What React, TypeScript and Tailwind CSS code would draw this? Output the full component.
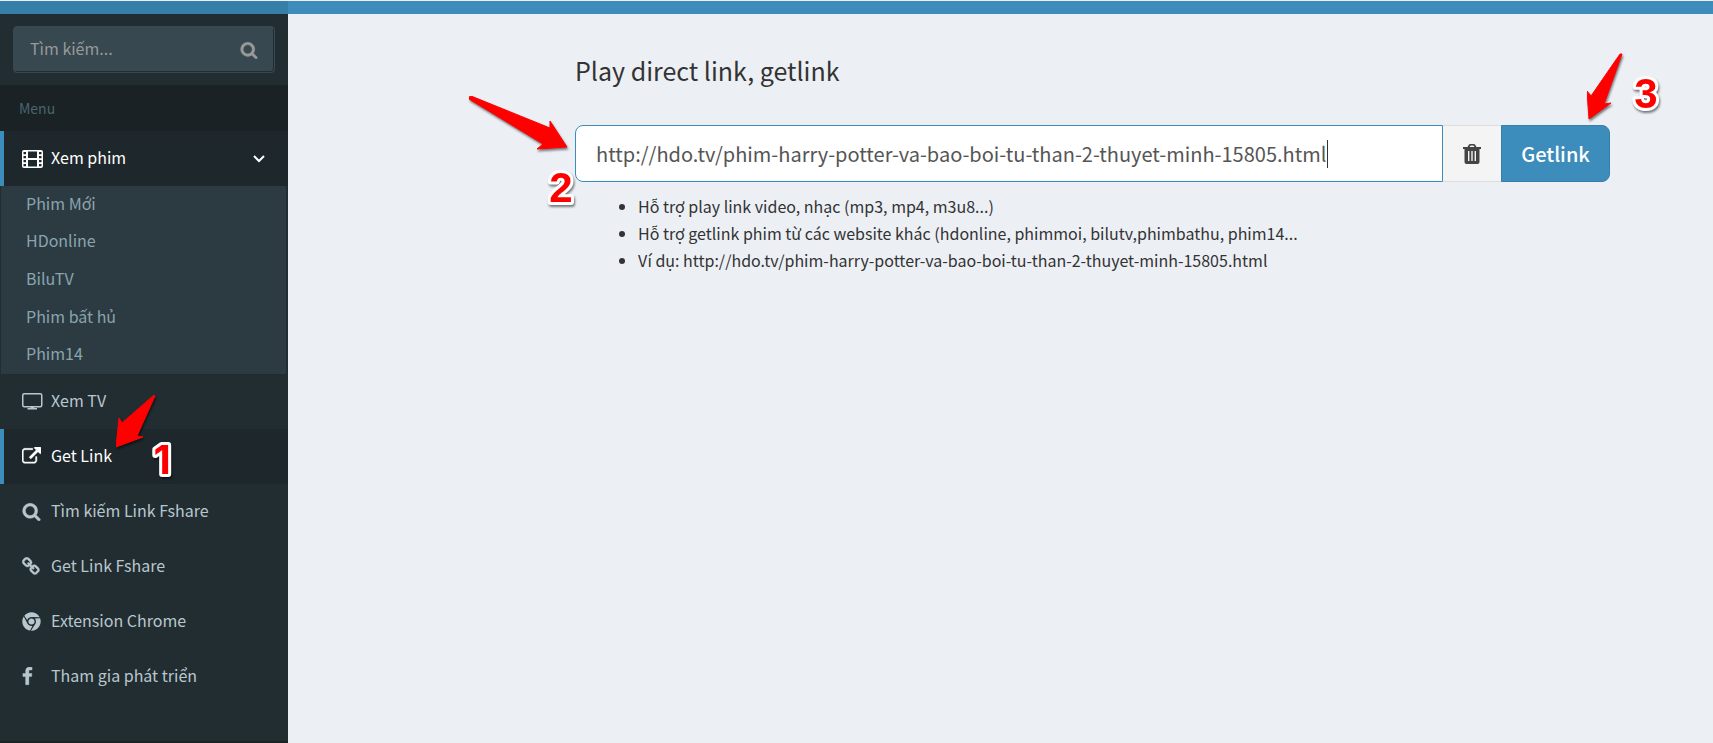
import { useState } from "react";
import type { ReactNode } from "react";
import { FaChrome } from "react-icons/fa";

const LINK = "http://hdo.tv/phim-harry-potter-va-bao-boi-tu-than-2-thuyet-minh-15805.html";

function Glyph({ d, className, box = "0 0 1792 1792" }: { d: string; className: string; box?: string }) {
  return (
    <svg viewBox={box} fill="currentColor" stroke="currentColor" strokeWidth="40" className={className} aria-hidden="true">
      <path d={d} />
    </svg>
  );
}

const SEARCH =
  "M1216 832q0-185-131.5-316.5t-316.5-131.5-316.5 131.5-131.5 316.5 131.5 316.5 316.5 131.5 316.5-131.5 131.5-316.5zm512 832q0 52-38 90t-90 38q-54 0-90-38l-343-342q-179 124-399 124-143 0-273.5-55.5t-225-150-150-225-55.5-273.5 55.5-273.5 150-225 225-150 273.5-55.5 273.5 55.5 225 150 150 225 55.5 273.5q0 220-124 399l343 343q37 37 37 90z";
const FACEBOOK =
  "M1343 12v264h-157q-86 0-116 36t-30 108v189h293l-39 296h-254v759h-306v-759h-255v-296h255v-218q0-186 104-288.5t277-102.5q147 0 228 12z";
const EXTERNAL =
  "M1408 928v320q0 119-84.5 203.5t-203.5 84.5h-832q-119 0-203.5-84.5t-84.5-203.5v-832q0-119 84.5-203.5t203.5-84.5h704q14 0 23 9t9 23v64q0 14-9 23t-23 9h-704q-66 0-113 47t-47 113v832q0 66 47 113t113 47h832q66 0 113-47t47-113v-320q0-14 9-23t23-9h64q14 0 23 9t9 23zm384-864v512q0 26-19 45t-45 19-45-19l-176-176-652 652q-10 10-23 10t-23-10l-114-114q-10-10-10-23t10-23l652-652-176-176q-19-19-19-45t19-45 45-19h512q26 0 45 19t19 45z";
const CHAIN =
  "M1456 1216q0-40-28-68l-208-208q-28-28-68-28-42 0-72 32 3 3 19 18.5t21.5 21.5 15 19 13 25.5 3.5 27.5q0 40-28 68t-68 28q-15 0-27.5-3.5t-25.5-13-19-15-21.5-21.5-18.5-19q-33 31-33 73 0 40 28 68l206 207q27 27 68 27 40 0 68-26l147-146q28-28 28-67zm-703-705q0-40-28-68l-206-207q-28-28-68-28-39 0-68 27l-147 146q-28 28-28 67 0 40 28 68l208 208q27 27 68 27 42 0 72-31-3-3-19-18.5t-21.5-21.5-15-19-13-25.5-3.5-27.5q0-40 28-68t68-28q15 0 27.5 3.5t25.5 13 19 15 21.5 21.5 18.5 19q33-31 33-73zm895 705q0 120-85 203l-147 146q-83 83-203 83-121 0-204-85l-206-207q-83-83-83-203 0-123 88-209l-88-88q-86 88-208 88-120 0-204-84l-208-208q-84-84-84-204t85-203l147-146q83-83 203-83 121 0 204 85l206 207q83 83 83 203 0 123-88 209l88 88q86-88 208-88 120 0 204 84l208 208q84 84 84 204z";

function FilmIcon() {
  return (
    <svg viewBox="0 0 21 18" className="w-[21px] h-[18px]" aria-hidden="true">
      <path
        fill="currentColor"
        fillRule="evenodd"
        d="M2 0h17a2 2 0 0 1 2 2v14a2 2 0 0 1-2 2H2a2 2 0 0 1-2-2V2a2 2 0 0 1 2-2zM1.5 2v2.3h2.5V2zM1.5 6v2.3h2.5V6zM1.5 10v2.3h2.5V10zM1.5 14v2.3h2.5V14zM6 1.5V8h9V1.5zM6 10v6.5h9V10zM17 2v2.3h2.5V2zM17 6v2.3h2.5V6zM17 10v2.3h2.5V10zM17 14v2.3h2.5V14z"
      />
    </svg>
  );
}

function TvIcon() {
  return (
    <svg viewBox="0 0 21 17" className="w-[21px] h-[17px]" aria-hidden="true">
      <rect x="0.75" y="0.75" width="19" height="13" rx="1.5" fill="none" stroke="currentColor" strokeWidth="1.5" />
      <path fill="currentColor" d="M8.5 13.5h3.5v1.5h3v1.5h-9.5v-1.5h3z" />
    </svg>
  );
}

function TrashIcon() {
  return (
    <svg viewBox="0 0 18 20" className="w-[18px] h-[20px]" aria-hidden="true">
      <path
        fill="currentColor"
        fillRule="evenodd"
        d="M4.5 3L6 0.6Q6.4 0 7 0h4q.6 0 1 .6L13.5 3H18v2H0V3zM6.6 3h4.8l-.9-1.500h-3zM1.5 5h15v13a2 2 0 0 1-2 2h-11a2 2 0 0 1-2-2zM5 7v10h1.400V7zM8.300 7v10h1.400V7zM11.600 7v10H13V7z"
      />
    </svg>
  );
}

function NavItem({ icon, label, active, open }: { icon: ReactNode; label: string; active?: boolean; open?: boolean }) {
  return (
    <a
      href="#"
      className={
        active
          ? "flex h-[55px] items-center border-l-4 border-[#3c8dbc] bg-[#1e282c] pl-[18px] pr-[23px] text-white"
          : "flex h-[55px] items-center border-l-4 border-transparent pl-[18px] pr-[23px] text-[#b8c7ce]"
      }
    >
      <span className="flex w-[29px] shrink-0 items-center">{icon}</span>
      <span className="grow pb-[4px]">{label}</span>
      {open !== undefined && (
        <svg viewBox="0 0 12 8" className="h-[8px] w-[12px]" fill="none" stroke="currentColor" strokeWidth="2" aria-hidden="true">
          <path d="M1 1l5 5 5-5" />
        </svg>
      )}
    </a>
  );
}

function Marker({ text, className }: { text: string; className: string }) {
  return (
    <svg
      viewBox="0 0 48 64"
      className={"absolute h-[64px] w-[48px] font-bold drop-shadow-[1px_2px_1px_rgba(0,0,0,0.5)] " + className}
    >
      <text x="24" y="46" textAnchor="middle" fill="#ff0000" stroke="#fff" strokeWidth="6" strokeLinejoin="round" paintOrder="stroke">
        {text}
      </text>
    </svg>
  );
}

function Arrow({ points, box, className }: { points: string; box: string; className: string }) {
  return (
    <svg viewBox={box} className={"absolute drop-shadow-[1px_2px_1px_rgba(0,0,0,0.5)] " + className} aria-hidden="true">
      <polygon points={points} fill="#ff0000" stroke="#ff0000" strokeWidth="1" strokeLinejoin="round" />
    </svg>
  );
}

const SUB = ["Phim Mới", "HDonline", "BiluTV", "Phim bất hủ", "Phim14"];

export default function App() {
  const [link, setLink] = useState(LINK);
  return (
    <div className="relative flex min-h-screen flex-col overflow-hidden bg-[#ecf0f5] pt-px font-['Source_Sans_Pro','Noto_Sans_CJK_SC','Noto_Sans',sans-serif] text-[16px] leading-[24px] text-[#333]">
      <header className="flex h-[13px]">
        <div className="w-[288px] bg-[#367fa9]" />
        <div className="grow bg-[#3c8dbc]" />
      </header>
      <div className="flex grow">
        <aside className="w-[288px] shrink-0 border-b-2 border-[#1a2226] bg-[#222d32]">
          <form className="mx-[13px] my-[12px] flex h-[47px] items-center rounded-[4px] border border-[#374850] bg-[#374850] text-[#999] shadow-[inset_-1px_-1px_0_#222d32]">
            <input
              aria-label="Tìm kiếm"
              placeholder="Tìm kiếm..."
              className="w-0 grow bg-transparent pb-[4px] pl-[16px] outline-none placeholder:text-[#999]"
            />
            <button type="button" aria-label="Tìm" className="px-[16px]">
              <Glyph d={SEARCH} className="h-[18px] w-[18px]" />
            </button>
          </form>
          <div className="flex h-[46px] items-center bg-[#1a2226] pl-[19px] text-[14px] text-[#4b646f]">Menu</div>
          <nav>
            <NavItem icon={<FilmIcon />} label="Xem phim" active open />
            <ul className="mx-px mr-[2px] h-[188px] bg-[#2c3b41]">
              {SUB.map((name) => (
                <li key={name} className="h-1/5">
                  <a href="#" className="flex h-full items-center pb-[4px] pl-[25px] text-[#8aa4af]">
                    {name}
                  </a>
                </li>
              ))}
            </ul>
            <NavItem icon={<TvIcon />} label="Xem TV" />
            <NavItem icon={<Glyph d={EXTERNAL} className="h-[19px] w-[19px]" />} label="Get Link" active />
            <NavItem icon={<Glyph d={SEARCH} className="h-[19px] w-[19px]" />} label="Tìm kiếm Link Fshare" />
            <NavItem icon={<Glyph d={CHAIN} className="h-[19px] w-[19px]" />} label="Get Link Fshare" />
            <NavItem icon={<FaChrome className="h-[19px] w-[19px]" />} label="Extension Chrome" />
            <NavItem
              icon={<Glyph d={FACEBOOK} box="400 0 1024 1792" className="h-[19px] w-[11px]" />}
              label="Tham gia phát triển"
            />
          </nav>
        </aside>
        <main className="grow pl-[287px] pr-[103px] pt-[38px]">
          <h1 className="text-[25px] leading-[36px]">Play direct link, getlink</h1>
          <form className="mt-[37px] flex h-[57px]">
            <div className="relative grow">
              <input
                aria-label="Link"
                value={link}
                onChange={(e) => setLink(e.target.value)}
                className="h-full w-full rounded-l-[8px] border border-[#3c8dbc] bg-white px-[20px] text-[20px] text-[#555] outline-none"
              />
              <span className="absolute top-[15px] left-[752px] h-[28px] w-px bg-[#333]" />
            </div>
            <button type="button" aria-label="Xóa" className="flex w-[58px] items-center justify-center border-y border-[#ddd] bg-[#f4f4f4] text-[#444]">
              <TrashIcon />
            </button>
            <button type="button" className="w-[109px] rounded-r-[8px] border border-[#367fa9] bg-[#3c8dbc] text-[20px] font-medium text-white">
              Getlink
            </button>
          </form>
          <ul className="mt-[11px] list-disc pl-[63px] text-[16px] leading-[27px]">
            <li>Hỗ trợ play link video, nhạc (mp3, mp4, m3u8...)</li>
            <li>Hỗ trợ getlink phim từ các website khác (hdonline, phimmoi, bilutv,phimbathu, phim14...</li>
            <li>Ví dụ: {LINK}</li>
          </ul>
        </main>
      </div>
      <Arrow box="0 0 40 54" points="38,1 39,2 21,42 27,43 0,53 3,24 6,29" className="top-[394px] left-[116px] h-[54px] w-[40px]" />
      <Arrow box="0 0 100 54" points="0,1 2,0 81,32 81,25 98,51 68,53 74,48 0,3" className="top-[96px] left-[469px] h-[54px] w-[100px]" />
      <Arrow box="0 0 36 68" points="33,1 35,1 17,51 24,50 2,66 0,38 4,43" className="top-[53px] left-[1587px] h-[68px] w-[36px]" />
      <Marker text="1" className="top-[428px] left-[138px] font-['Inter',sans-serif] text-[40px]" />
      <Marker text="2" className="top-[156px] left-[537px] font-['Liberation_Sans',sans-serif] text-[42px]" />
      <Marker text="3" className="top-[62px] left-[1622px] font-['Liberation_Sans',sans-serif] text-[42px]" />
    </div>
  );
}
